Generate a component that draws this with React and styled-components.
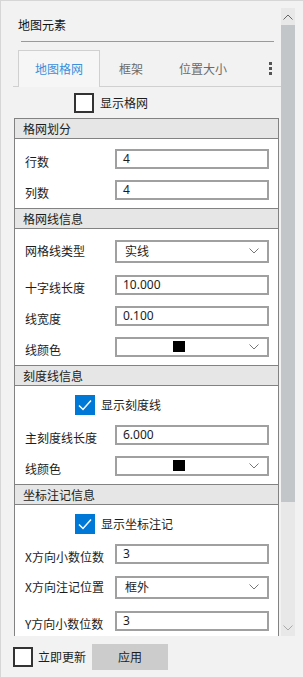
import React from 'react';
import styled, { createGlobalStyle } from 'styled-components';

const GlobalStyle = createGlobalStyle`
  * { box-sizing: border-box; }
  html, body { margin: 0; padding: 0; background: #f2f2f2; }
  body {
    font-family: "Noto Sans CJK SC", "Noto Sans", sans-serif;
    font-size: 12px;
    line-height: 16px;
    color: #1c1c1c;
  }
`;

const Window = styled.div`
  width: 304px;
  height: 678px;
  border: 1px solid #d6d6d6;
  background: #f2f2f2;
  display: flex;
  flex-direction: column;
`;

const Main = styled.div`
  display: flex;
  height: 628px;
  margin-top: 7px;
`;

const Viewport = styled.div`
  flex: 1;
  overflow: hidden;
`;

const Scrollbar = styled.div`
  width: 14px;
  margin-right: 8px;
  display: flex;
  flex-direction: column;
  background: #e8e8e8;
`;

const ScrollButton = styled.div`
  height: ${(p) => p.$h}px;
  display: flex;
  align-items: center;
  justify-content: center;
`;

const Thumb = styled.div`
  height: 477px;
  background: #c2c6c8;
`;

const Track = styled.div`
  flex: 1;
`;

const Title = styled.div`
  height: 33px;
  line-height: 33px;
  padding-left: 17px;
  color: #111;
`;

const Divider = styled.div`
  height: 1px;
  background: #9a9a9a;
  margin: 0 7px 0 20px;
`;

const TabBar = styled.div`
  height: 37px;
  margin: 8px 0 0 12px;
  padding-left: 5px;
  border-bottom: 1px solid #d0d0d0;
  display: flex;
  align-items: flex-end;
  gap: 2px;
`;

const Tab = styled.div`
  height: 37px;
  margin-bottom: -1px;
  padding: 0 16px;
  line-height: 35px;
  border: 1px solid ${(p) => (p.$active ? '#d0d0d0' : 'transparent')};
  border-bottom: none;
  background: ${(p) => (p.$active ? '#f6f6f6' : 'transparent')};
  color: ${(p) => (p.$active ? '#3b8fdc' : '#6a6a6a')};
`;

const Dots = styled.div`
  margin-left: auto;
  margin-right: 9px;
  align-self: center;
  display: flex;
  flex-direction: column;
  gap: 2px;
  span {
    width: 3px;
    height: 3px;
    background: #555;
  }
`;

const CheckRow = styled.div`
  height: ${(p) => p.$h}px;
  display: flex;
  align-items: center;
  gap: 6px;
  padding-left: ${(p) => p.$indent}px;
`;

const Box = styled.div`
  width: 20px;
  height: 20px;
  flex: none;
  border: ${(p) => (p.$checked ? 'none' : '2px solid #333')};
  background: ${(p) => (p.$checked ? '#0078d7' : '#fff')};
  display: flex;
  align-items: center;
  justify-content: center;
`;

const Sections = styled.div`
  margin: 0 2px 0 13px;
  border-left: 1px solid #828282;
  border-right: 1px solid #828282;
  background: #fff;
`;

const Header = styled.div`
  height: 21px;
  border-top: 1px solid #828282;
  border-bottom: 1px solid #828282;
  background: #e6e6e6;
  padding-left: 8px;
  line-height: 19px;
  color: #1c1c1c;
`;

const Body = styled.div`
  padding: 4px 9px 3px 10px;
`;

const Row = styled.div`
  height: ${(p) => p.$h}px;
  display: flex;
  align-items: center;
`;

const Label = styled.div`
  width: 90px;
  flex: none;
  padding-top: ${(p) => (p.$low ? 6 : 0)}px;
  white-space: nowrap;
`;

const Input = styled.div`
  flex: 1;
  height: 20px;
  border: 2px solid #a0a0a0;
  background: #fff;
  padding: 0 6px;
  display: flex;
  align-items: center;
  line-height: 16px;
  font-family: "Noto Sans", "Noto Sans CJK SC", sans-serif;
`;

const Select = styled.div`
  flex: 1;
  height: ${(p) => (p.$tall ? 23 : 20)}px;
  border: 2px solid #a0a0a0;
  background: #fff;
  display: flex;
  align-items: center;
`;

const SelectValue = styled.div`
  flex: 1;
  padding-left: ${(p) => (p.$center ? 0 : 8)}px;
  display: flex;
  align-items: center;
  justify-content: ${(p) => (p.$center ? 'center' : 'flex-start')};
`;

const Swatch = styled.div`
  width: 12px;
  height: 11px;
  background: #000;
`;

const Caret = styled.div`
  width: 27px;
  flex: none;
  padding-right: 8px;
  display: flex;
  align-items: center;
  justify-content: flex-end;
`;

const Footer = styled.div`
  flex: 1;
  display: flex;
  align-items: center;
  padding-left: 12px;
`;

const FooterLabel = styled.span`
  margin-left: 5px;
  line-height: 16px;
`;

const Button = styled.button`
  margin-left: 6px;
  width: 76px;
  height: 26px;
  border: none;
  background: #cccccc;
  font: inherit;
  line-height: 16px;
  color: #1c1c1c;
  padding: 0;
`;

const Chevron = ({ up, color = '#777' }) => (
  <svg width="10" height="6" viewBox="0 0 10 6">
    <polyline
      points={up ? '0.5,5.5 5,1 9.5,5.5' : '0.5,0.5 5,5 9.5,0.5'}
      fill="none"
      stroke={color}
      strokeWidth="1"
    />
  </svg>
);

const Check = ({ checked }) => (
  <Box $checked={checked}>
    {checked && (
      <svg width="16" height="16" viewBox="0 0 16 16">
        <polyline points="2,8.5 6,12.5 14,3.5" fill="none" stroke="#fff" strokeWidth="1.5" />
      </svg>
    )}
  </Box>
);

const Field = ({ label, value }) => (
  <Row $h={31}>
    <Label $low>{label}</Label>
    <Input>{value}</Input>
  </Row>
);

const Dropdown = ({ label, value }) => (
  <Row $h={36}>
    <Label>{label}</Label>
    <Select $tall>
      <SelectValue>{value}</SelectValue>
      <Caret><Chevron /></Caret>
    </Select>
  </Row>
);

const ColorPick = ({ label }) => (
  <Row $h={31}>
    <Label $low>{label}</Label>
    <Select>
      <SelectValue $center><Swatch /></SelectValue>
      <Caret><Chevron /></Caret>
    </Select>
  </Row>
);

const App = () => {
  return (
    <Window>
      <GlobalStyle />
      <Main>
        <Viewport>
          <Title>地图元素</Title>
          <Divider />
          <TabBar>
            <Tab $active>地图格网</Tab>
            <Tab>框架</Tab>
            <Tab>位置大小</Tab>
            <Dots><span /><span /><span /></Dots>
          </TabBar>
          <CheckRow $h={31} $indent={73}>
            <Check />
            <span>显示格网</span>
          </CheckRow>
          <Sections>
            <Header>格网划分</Header>
            <Body>
              <Field label="行数" value="4" />
              <Field label="列数" value="4" />
            </Body>
            <Header>格网线信息</Header>
            <Body>
              <Dropdown label="网格线类型" value="实线" />
              <Field label="十字线长度" value="10.000" />
              <Field label="线宽度" value="0.100" />
              <ColorPick label="线颜色" />
            </Body>
            <Header>刻度线信息</Header>
            <Body>
              <CheckRow $h={29} $indent={50}>
                <Check checked />
                <span>显示刻度线</span>
              </CheckRow>
              <Field label="主刻度线长度" value="6.000" />
              <ColorPick label="线颜色" />
            </Body>
            <Header>坐标注记信息</Header>
            <Body>
              <CheckRow $h={29} $indent={50}>
                <Check checked />
                <span>显示坐标注记</span>
              </CheckRow>
              <Field label="X方向小数位数" value="3" />
              <Dropdown label="X方向注记位置" value="框外" />
              <Field label="Y方向小数位数" value="3" />
            </Body>
          </Sections>
        </Viewport>
        <Scrollbar>
          <ScrollButton $h={17}><Chevron up color="#666" /></ScrollButton>
          <Thumb />
          <Track />
          <ScrollButton $h={16}><Chevron color="#aaa" /></ScrollButton>
        </Scrollbar>
      </Main>
      <Footer>
        <Check />
        <FooterLabel>立即更新</FooterLabel>
        <Button>应用</Button>
      </Footer>
    </Window>
  );
};

export default App;
